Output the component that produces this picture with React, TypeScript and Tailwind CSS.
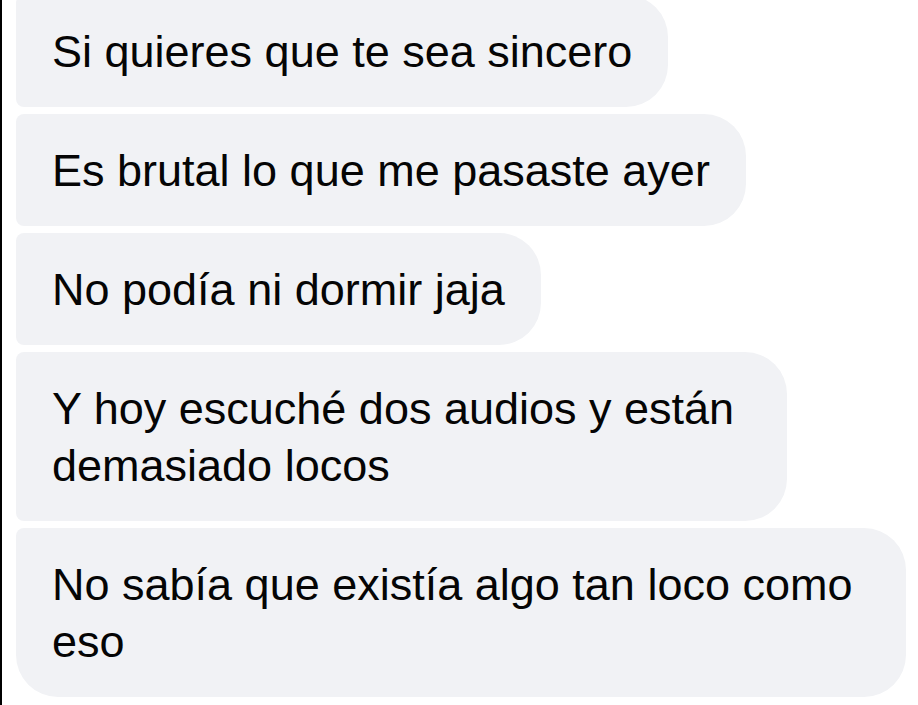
const messages: { lines: string[]; last?: boolean }[] = [
  { lines: ["Si quieres que te sea sincero"] },
  { lines: ["Es brutal lo que me pasaste ayer"] },
  { lines: ["No podía ni dormir jaja"] },
  { lines: ["Y hoy escuché dos audios y están", "demasiado locos"] },
  { lines: ["No sabía que existía algo tan loco como", "eso"], last: true },
];

const Bubble = ({ lines, last }: { lines: string[]; last?: boolean }) => {
  const wrapped = lines.length > 1;
  return (
    <div
      className={`w-fit bg-[#f1f2f5] py-[27.5px] pl-[36px] text-[45px] leading-[57px] text-[#050505] rounded-tl-[8px] rounded-tr-[42px] rounded-br-[42px] ${
        last ? "rounded-bl-[42px]" : "rounded-bl-[8px]"
      } ${wrapped ? "pr-[53px]" : "pr-[36px]"}`}
    >
      {lines.map((line, i) => (
        <div key={i} className="whitespace-nowrap">
          {line}
        </div>
      ))}
    </div>
  );
};

const App = () => {
  return (
    <div
      className="h-[705px] w-[918px] overflow-hidden border-l-2 border-black bg-white pl-[14px]"
      style={{ fontFamily: '"Liberation Sans", Arial, sans-serif' }}
    >
      <div className="-mt-[5px] flex flex-col items-start gap-[7px]">
        {messages.map((m, i) => (
          <Bubble key={i} lines={m.lines} last={m.last} />
        ))}
      </div>
    </div>
  );
};

export default App;
